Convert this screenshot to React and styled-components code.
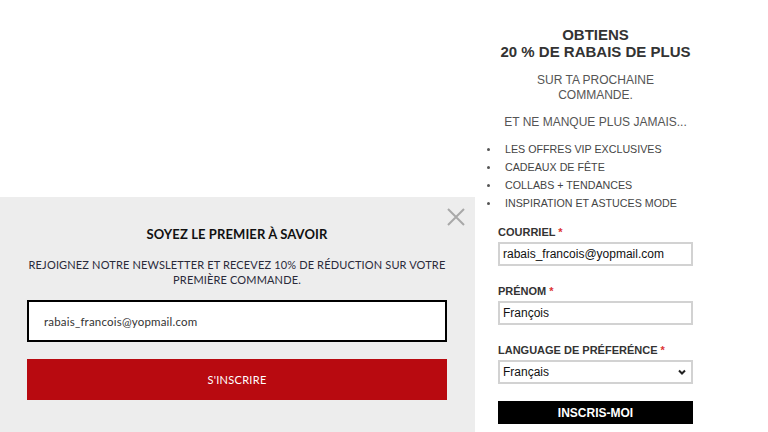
import React from "react";
import styled, { createGlobalStyle } from "styled-components";

const Global = createGlobalStyle`
  html, body { margin: 0; padding: 0; background: #fff; }
  body { width: 768px; height: 432px; overflow: hidden; }
  * { box-sizing: border-box; }
`;

const Page = styled.div`
  display: flex;
  width: 768px;
  height: 432px;
`;

const LeftArea = styled.div`
  width: 475px;
  height: 432px;
  display: flex;
  flex-direction: column;
  justify-content: flex-end;
`;

const Popup = styled.section`
  position: relative;
  height: 235px;
  background: #ededed;
  padding: 28px 28px 0 27px;
  display: flex;
  flex-direction: column;
  align-items: stretch;
  font-family: Lato, "Open Sans", sans-serif;
`;

const Close = styled.button`
  position: absolute;
  top: 10px;
  right: 9px;
  width: 20px;
  height: 20px;
  padding: 0;
  border: 0;
  background: transparent;
  cursor: pointer;
`;

const PopTitle = styled.h2`
  margin: 0;
  text-align: center;
  font-size: 13px;
  line-height: 18px;
  font-weight: 700;
  color: #111;
  letter-spacing: 0.1px;
`;

const PopText = styled.p`
  margin: 14px 0 0;
  text-align: center;
  font-size: 11px;
  line-height: 15px;
  color: #2a2a3a;
  letter-spacing: 0.15px;
`;

const PopInput = styled.div`
  margin-top: 13px;
  height: 42px;
  border: 2px solid #000;
  background: #fff;
  display: flex;
  align-items: center;
  padding-left: 15px;
  font-size: 11.5px;
  color: #333;
  letter-spacing: 0.2px;
`;

const RedButton = styled.button`
  margin-top: 17px;
  height: 41px;
  border: 0;
  background: #b80a10;
  color: #fff;
  font-family: inherit;
  font-size: 11px;
  letter-spacing: 0.3px;
  cursor: pointer;
`;

const Side = styled.aside`
  width: 235px;
  margin-left: 3px;
  padding: 26px 20px 0;
  font-family: "Liberation Sans", Arial, sans-serif;
  display: flex;
  flex-direction: column;
`;

const Heading = styled.h1`
  margin: 0;
  text-align: center;
  font-size: 15px;
  line-height: 17px;
  font-weight: 700;
  color: #333;
`;

const SubText = styled.p`
  margin: ${(p) => p.$gap}px 0 0;
  text-align: center;
  font-size: 12px;
  line-height: 15px;
  color: #555;
`;

const List = styled.ul`
  margin: 10px 0 0 -20px;
  padding: 0 0 0 27px;
  list-style: none;
`;

const Item = styled.li`
  position: relative;
  font-size: 10.7px;
  line-height: 18px;
  color: #444;
  &::before {
    content: "";
    position: absolute;
    left: -18px;
    top: 8px;
    width: 3px;
    height: 3px;
    border-radius: 50%;
    background: #555;
  }
`;

const Field = styled.div`
  display: flex;
  flex-direction: column;
  margin-top: ${(p) => p.$gap}px;
`;

const Label = styled.label`
  font-size: 11px;
  line-height: 13px;
  font-weight: 700;
  color: #333;
  margin-bottom: 3px;
  span { color: #d33; }
`;

const TextBox = styled.div`
  height: 24px;
  border: 2px solid #d2d2d2;
  display: flex;
  align-items: center;
  padding-left: 3px;
  font-size: 12px;
  color: #111;
  background: #fff;
`;

const SelectBox = styled(TextBox)`
  justify-content: space-between;
  padding-right: 4px;
`;

const BlackButton = styled.button`
  margin-top: 17px;
  height: 23px;
  border: 0;
  background: #000;
  color: #fff;
  font-family: inherit;
  font-size: 12px;
  font-weight: 700;
  cursor: pointer;
`;

const items = [
  "LES OFFRES VIP EXCLUSIVES",
  "CADEAUX DE FÊTE",
  "COLLABS + TENDANCES",
  "INSPIRATION ET ASTUCES MODE",
];

export default function App() {
  return (
    <>
      <Global />
      <Page>
        <LeftArea>
          <Popup>
            <Close aria-label="Fermer">
              <svg width="20" height="20" viewBox="0 0 20 20">
                <path d="M2 2 L18 18 M18 2 L2 18" stroke="#a8a8a8" strokeWidth="2" fill="none" />
              </svg>
            </Close>
            <PopTitle>SOYEZ LE PREMIER À SAVOIR</PopTitle>
            <PopText>
              REJOIGNEZ NOTRE NEWSLETTER ET RECEVEZ 10% DE RÉDUCTION SUR VOTRE PREMIÈRE COMMANDE.
            </PopText>
            <PopInput>rabais_francois@yopmail.com</PopInput>
            <RedButton>S'INSCRIRE</RedButton>
          </Popup>
        </LeftArea>
        <Side>
          <Heading>
            OBTIENS
            <br />
            20 % DE RABAIS DE PLUS
          </Heading>
          <SubText $gap={13}>
            SUR TA PROCHAINE
            <br />
            COMMANDE.
          </SubText>
          <SubText $gap={12}>ET NE MANQUE PLUS JAMAIS...</SubText>
          <List>
            {items.map((t) => (
              <Item key={t}>{t}</Item>
            ))}
          </List>
          <Field $gap={14}>
            <Label>
              COURRIEL <span>*</span>
            </Label>
            <TextBox>rabais_francois@yopmail.com</TextBox>
          </Field>
          <Field $gap={19}>
            <Label>
              PRÉNOM <span>*</span>
            </Label>
            <TextBox>François</TextBox>
          </Field>
          <Field $gap={19}>
            <Label>
              LANGUAGE DE PRÉFERÉNCE <span>*</span>
            </Label>
            <SelectBox>
              Français
              <svg width="10" height="8" viewBox="0 0 10 8">
                <path d="M2 2.5 L5 5.5 L8 2.5" stroke="#222" strokeWidth="2" fill="none" />
              </svg>
            </SelectBox>
          </Field>
          <BlackButton>INSCRIS-MOI</BlackButton>
        </Side>
      </Page>
    </>
  );
}
